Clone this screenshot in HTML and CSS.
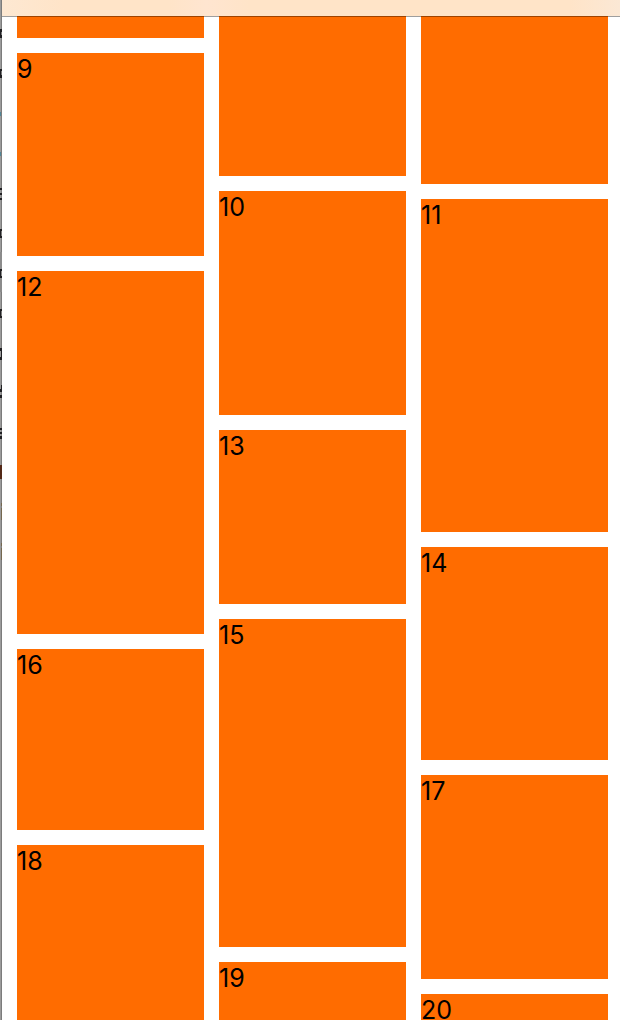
FILE: index.html
```html
<!DOCTYPE html>
<html lang="en">
<head>
<meta charset="utf-8">
<title>Masonry</title>
<link rel="stylesheet" href="styles.css">
</head>
<body>
<div class="screen">
  <div class="backdrop" aria-hidden="true">
    <svg class="backdrop-marks" width="2" height="570" viewBox="0 0 2 570" shape-rendering="crispEdges">
      <path fill="#8b8b8b" d="M0 252h2v40H0z"/>
      <path fill="#202023" d="M0 29h2v3H0zM0 32h1v3H0zM0 35h2v3H0zM0 69h2v2H0zM0 71h1v4H0zM0 75h2v3H0zM0 188h2v2H0zM0 193h2v2H0zM0 198h2v2H0zM0 229h2v2H0zM0 231h1v5H0zM0 236h2v2H0zM0 269h2v2H0zM0 271h1v5H0zM0 276h2v2H0zM0 309h2v2H0zM0 311h1v5H0zM0 316h2v2H0zM0 348h2v3H0zM1 351h1v6H1zM0 357h2v3H0zM1 385h1v4H1zM0 389h2v3H0zM0 395h2v3H0zM0 428h2v2H0zM0 432h2v2H0zM0 436h2v3H0z"/>
      <path fill="#508697" d="M0 112h1v4H0zM0 152h1v4H0z"/>
      <path fill="#532817" d="M0 465h2v14H0z"/>
      <path fill="#75684f" d="M1 503h1v3H1zM1 508h1v12H1zM1 543h1v3H1zM1 548h1v12H1z"/>
    </svg>
  </div>
  <div class="window">
    <header class="toolbar"></header>
    <main class="masonry">
      <div class="column">
        <div class="tile" style="height:22px"></div>
        <div class="tile" style="height:203px">9</div>
        <div class="tile" style="height:363px">12</div>
        <div class="tile" style="height:181px">16</div>
        <div class="tile tile-last">18</div>
      </div>
      <div class="column">
        <div class="tile" style="height:160px"></div>
        <div class="tile" style="height:224px">10</div>
        <div class="tile" style="height:174px">13</div>
        <div class="tile" style="height:328px">15</div>
        <div class="tile tile-last">19</div>
      </div>
      <div class="column">
        <div class="tile" style="height:168px"></div>
        <div class="tile" style="height:333px">11</div>
        <div class="tile" style="height:213px">14</div>
        <div class="tile" style="height:204px">17</div>
        <div class="tile tile-last">20</div>
      </div>
    </main>
  </div>
</div>
</body>
</html>
```
FILE: styles.css
```css
* {
  box-sizing: border-box;
}

body {
  margin: 0;
  background: #fff;
  color: #000;
  font-family: Inter, "Liberation Sans", sans-serif;
  font-size: 25px;
  line-height: 32px;
}

.screen {
  display: flex;
  height: 100vh;
  overflow: hidden;
}

.backdrop {
  flex: none;
  width: 2px;
  background: linear-gradient(to right, #9b9b9b 50%, #7c7c7c 50%);
}

.backdrop-marks {
  display: block;
}

.window {
  flex: 1;
  min-width: 0;
  display: flex;
  flex-direction: column;
  background: #fff;
}

/* The hairline is translucent and lies over the tiles. */
.toolbar {
  position: relative;
  z-index: 1;
  flex: none;
  height: 16px;
  background: linear-gradient(to right, #fde8d2, #ffe4c8 10%, #ffe4c8 27%, #ffe5d0 33%, #ffe4c8 40%, #ffe4c8 92%, #fbe8d5);
  box-shadow: 0 1px 0 rgba(0, 0, 0, 0.38);
}

.masonry {
  flex: 1;
  min-height: 0;
  display: grid;
  grid-template-columns: repeat(3, minmax(0, 1fr));
  gap: 15px;
  padding: 0 12px 0 15px;
}

.column {
  display: flex;
  flex-direction: column;
  gap: 15px;
  min-height: 0;
}

.tile {
  flex: none;
  background: #ff6c00;
}

.tile-last {
  flex: 1;
}
```
